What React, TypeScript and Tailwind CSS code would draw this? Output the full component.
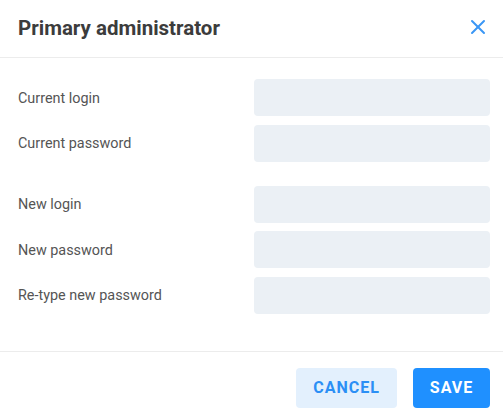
import { X } from "lucide-react";

const groups: string[][] = [
  ["Current login", "Current password"],
  ["New login", "New password", "Re-type new password"],
];

function Field({ label }: { label: string }) {
  return (
    <div className="flex items-center h-[37px]">
      <label className="flex-1 text-[14.4px] text-[#555555] pt-[2px]">{label}</label>
      <input className="w-[236px] h-full rounded-[4px] bg-[#ebf0f5] outline-none px-3 text-[14px]" />
    </div>
  );
}

export default function App() {
  return (
    <div className="w-[503px] h-[418px] bg-white flex flex-col font-['Roboto',sans-serif]">
      <div className="h-[58px] flex items-center justify-between pl-[18px] pr-[13px] border-b border-[#ececec]">
        <h2 className="text-[20.5px] font-bold text-[#3c3c3c]">Primary administrator</h2>
        <button className="text-[#3b97f5] -mt-[4px]">
          <X size={24} strokeWidth={2} />
        </button>
      </div>
      <div className="flex flex-col gap-[24px] pt-[21px] pb-[37px] pl-[18px] pr-[13px] border-b border-[#ececec]">
        {groups.map((g, i) => (
          <div key={i} className="flex flex-col gap-[8.5px]">
            {g.map((l) => (
              <Field key={l} label={l} />
            ))}
          </div>
        ))}
      </div>
      <div className="flex justify-end gap-[16px] pt-[16px] pr-[13px]">
        <button className="h-[40px] w-[101px] rounded-[4px] bg-[#e3f0fd] text-[#2b8ff5] text-[16px] font-bold tracking-[1px]">
          CANCEL
        </button>
        <button className="h-[40px] w-[77px] rounded-[4px] bg-[#1f90ff] text-white text-[16px] font-bold tracking-[1px]">
          SAVE
        </button>
      </div>
    </div>
  );
}
